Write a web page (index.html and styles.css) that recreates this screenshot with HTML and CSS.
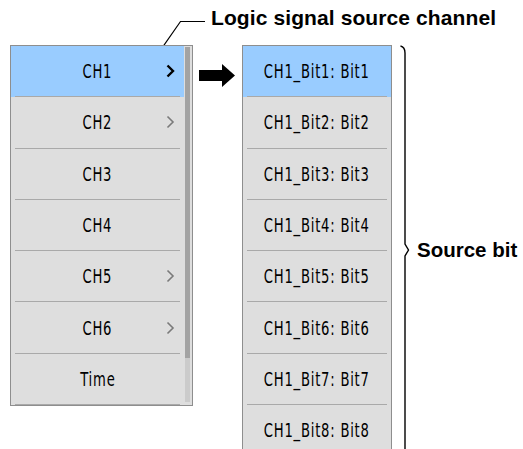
FILE: index.html
```html
<!DOCTYPE html>
<html lang="en">
<head>
    <meta charset="UTF-8">
    <meta name="viewport" content="width=device-width, initial-scale=1.0">
    <title>Logic signal source</title>
    <link rel="stylesheet" href="styles.css">
</head>
<body>
    <div class="figure">
        <div class="callout">Logic signal source channel</div>

        <div class="stage">
            <div class="menu menu-channel">
                <div class="list">
                    <div class="item selected">
                        <div class="item-label"><span class="name">CH1</span><svg class="chev" width="9" height="14" viewBox="0 0 9 14"><path d="M1.5 1.5 L7 7 L1.5 12.5" /></svg></div>
                    </div>
                    <div class="item">
                        <div class="item-label"><span class="name">CH2</span><svg class="chev" width="9" height="14" viewBox="0 0 9 14"><path d="M1.5 1.5 L7 7 L1.5 12.5" /></svg></div>
                    </div>
                    <div class="item">
                        <div class="item-label"><span class="name">CH3</span></div>
                    </div>
                    <div class="item">
                        <div class="item-label"><span class="name">CH4</span></div>
                    </div>
                    <div class="item">
                        <div class="item-label"><span class="name">CH5</span><svg class="chev" width="9" height="14" viewBox="0 0 9 14"><path d="M1.5 1.5 L7 7 L1.5 12.5" /></svg></div>
                    </div>
                    <div class="item">
                        <div class="item-label"><span class="name">CH6</span><svg class="chev" width="9" height="14" viewBox="0 0 9 14"><path d="M1.5 1.5 L7 7 L1.5 12.5" /></svg></div>
                    </div>
                    <div class="item">
                        <div class="item-label"><span class="name">Time</span></div>
                    </div>
                </div>
                <div class="scrollbar">
                    <div class="track"><div class="thumb"></div></div>
                </div>
            </div>

            <svg class="arrow" width="36" height="24" viewBox="0 0 36 24">
                <path d="M0 6 H23 V0 L36 11.5 L23 23 V17 H0 Z" fill="#000" />
            </svg>

            <div class="menu menu-bit">
                <div class="item selected"><div class="item-label"><span class="name">CH1_Bit1: Bit1</span></div></div>
                <div class="item"><div class="item-label"><span class="name">CH1_Bit2: Bit2</span></div></div>
                <div class="item"><div class="item-label"><span class="name">CH1_Bit3: Bit3</span></div></div>
                <div class="item"><div class="item-label"><span class="name">CH1_Bit4: Bit4</span></div></div>
                <div class="item"><div class="item-label"><span class="name">CH1_Bit5: Bit5</span></div></div>
                <div class="item"><div class="item-label"><span class="name">CH1_Bit6: Bit6</span></div></div>
                <div class="item"><div class="item-label"><span class="name">CH1_Bit7: Bit7</span></div></div>
                <div class="item"><div class="item-label"><span class="name">CH1_Bit8: Bit8</span></div></div>
            </div>

            <div class="brace-group">
                <svg class="brace" width="12" height="410" viewBox="0 0 12 410">
                    <path d="M0.5 1 Q5 2 5 8 V199 L8.5 205 L5 211 V410" fill="none" stroke="#000" stroke-width="1.4" />
                </svg>
                <div class="brace-label">Source bit</div>
            </div>
        </div>

        <!-- leader line from the callout to CH1 -->
        <svg class="leader" width="60" height="40" viewBox="0 0 60 40">
            <path d="M55 16.5 H30.5 L12 43" fill="none" stroke="#000" stroke-width="1.2" />
        </svg>
    </div>
</body>
</html>
```

FILE: styles.css
```css
html, body {
    height: 449px;
    overflow: hidden;
}
body {
    margin: 0;
    background-color: #fff;
    color: #000;
    font-family: "Liberation Sans", Arial, sans-serif;
}
.figure {
    position: relative;
}
.callout {
    height: 45px;
    box-sizing: border-box;
    padding: 6px 0 0 211px;
    font-size: 21px;
    font-weight: bold;
    line-height: 24px;
    letter-spacing: 0.1px;
}
.leader {
    position: absolute;
    left: 150px;
    top: 5px;
}
.stage {
    display: flex;
    align-items: flex-start;
    padding-left: 10px;
}

/* menus */
.menu {
    box-sizing: border-box;
    border: 1px solid #8e8e8e;
    background-color: #dedede;
}
.menu-channel {
    width: 183px;
    display: flex;
}
.list {
    width: 173px;
}
.menu-bit {
    width: 150px;
    margin-left: 7px;
}
.item {
    height: 51.3px;
}
.item.selected {
    background-color: #99ccff;
}
.item-label {
    box-sizing: border-box;
    height: 100%;
    margin: 0 4px;
    border-bottom: 1px solid #a9a9a9;
    display: grid;
    grid-template-columns: 1fr auto 1fr;
    align-items: center;
    font-family: "DejaVu Sans Condensed", "Liberation Sans", sans-serif;
    font-size: 19px;
    color: #000;
}
.item-label .name {
    grid-column: 2;
    letter-spacing: 1px;
    transform: scaleX(0.77);
}
.chev {
    grid-column: 3;
    justify-self: end;
    margin-right: 5px;
}
.chev path {
    fill: none;
    stroke: #7a7a7a;
    stroke-width: 1.6;
}
.selected .chev path {
    stroke: #000;
    stroke-width: 2.4;
}

/* scrollbar of the channel menu */
.scrollbar {
    width: 8px;
    padding: 1px 2px 3px 1px;
    box-sizing: border-box;
}
.track {
    height: 355px;
    background-color: #cbcbcb;
}
.thumb {
    height: 311px;
    background-color: #a3a3a3;
}

.arrow {
    margin: 19px 0 0 6px;
}

/* brace and its label */
.brace-group {
    display: flex;
    align-items: flex-start;
    margin-left: 8px;
}
.brace-label {
    margin: 193px 0 0 5px;
    font-size: 20.5px;
    font-weight: bold;
    line-height: 24px;
    white-space: nowrap;
}
```
